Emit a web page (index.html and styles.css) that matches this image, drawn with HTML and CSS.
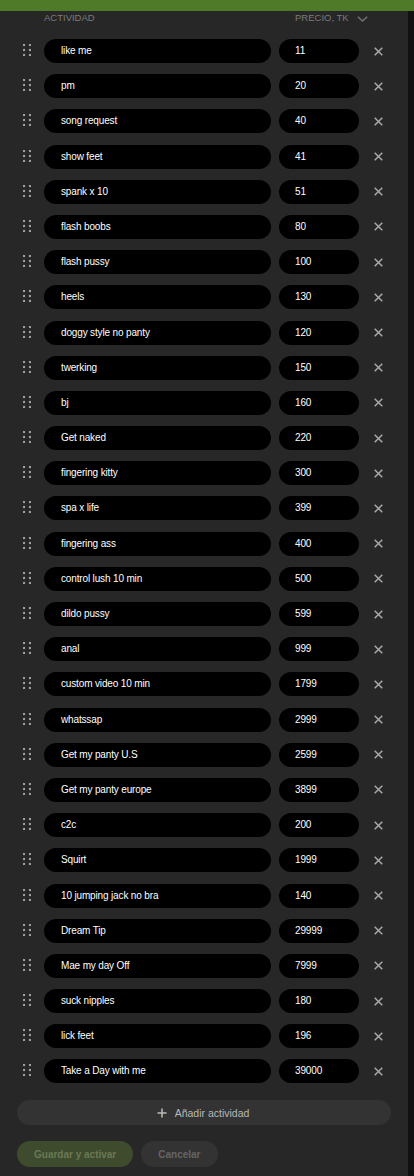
FILE: index.html
```html
<!DOCTYPE html>
<html lang="es">
<head>
<meta charset="utf-8">
<title>Actividades</title>
<link rel="stylesheet" href="styles.css">
</head>
<body>
<div class="topbar"></div>
<div class="frame">
  <main class="panel">
    <div class="head">
      <span class="head-act">ACTIVIDAD</span>
      <span class="head-price">PRECIO, TK
        <svg class="chev" width="11" height="6" viewBox="0 0 11 6"><polyline points="0.8,0.8 5.5,5 10.2,0.8" fill="none" stroke="#747474" stroke-width="1.5"/></svg>
      </span>
    </div>
    <div class="rows" id="rows">
      <div class="row"><span class="grip"><svg width="8" height="12" viewBox="0 0 8 12"><circle cx="1" cy="1" r="1.2"/><circle cx="7" cy="1" r="1.2"/><circle cx="1" cy="6" r="1.2"/><circle cx="7" cy="6" r="1.2"/><circle cx="1" cy="11" r="1.2"/><circle cx="7" cy="11" r="1.2"/></svg></span><div class="pill name">like me</div><div class="pill price">11</div><span class="del"><svg width="9" height="9" viewBox="0 0 9 9"><path d="M0.7 0.7L8.3 8.3M8.3 0.7L0.7 8.3"/></svg></span></div>
      <div class="row"><span class="grip"><svg width="8" height="12" viewBox="0 0 8 12"><circle cx="1" cy="1" r="1.2"/><circle cx="7" cy="1" r="1.2"/><circle cx="1" cy="6" r="1.2"/><circle cx="7" cy="6" r="1.2"/><circle cx="1" cy="11" r="1.2"/><circle cx="7" cy="11" r="1.2"/></svg></span><div class="pill name">pm</div><div class="pill price">20</div><span class="del"><svg width="9" height="9" viewBox="0 0 9 9"><path d="M0.7 0.7L8.3 8.3M8.3 0.7L0.7 8.3"/></svg></span></div>
      <div class="row"><span class="grip"><svg width="8" height="12" viewBox="0 0 8 12"><circle cx="1" cy="1" r="1.2"/><circle cx="7" cy="1" r="1.2"/><circle cx="1" cy="6" r="1.2"/><circle cx="7" cy="6" r="1.2"/><circle cx="1" cy="11" r="1.2"/><circle cx="7" cy="11" r="1.2"/></svg></span><div class="pill name">song request</div><div class="pill price">40</div><span class="del"><svg width="9" height="9" viewBox="0 0 9 9"><path d="M0.7 0.7L8.3 8.3M8.3 0.7L0.7 8.3"/></svg></span></div>
      <div class="row"><span class="grip"><svg width="8" height="12" viewBox="0 0 8 12"><circle cx="1" cy="1" r="1.2"/><circle cx="7" cy="1" r="1.2"/><circle cx="1" cy="6" r="1.2"/><circle cx="7" cy="6" r="1.2"/><circle cx="1" cy="11" r="1.2"/><circle cx="7" cy="11" r="1.2"/></svg></span><div class="pill name">show feet</div><div class="pill price">41</div><span class="del"><svg width="9" height="9" viewBox="0 0 9 9"><path d="M0.7 0.7L8.3 8.3M8.3 0.7L0.7 8.3"/></svg></span></div>
      <div class="row"><span class="grip"><svg width="8" height="12" viewBox="0 0 8 12"><circle cx="1" cy="1" r="1.2"/><circle cx="7" cy="1" r="1.2"/><circle cx="1" cy="6" r="1.2"/><circle cx="7" cy="6" r="1.2"/><circle cx="1" cy="11" r="1.2"/><circle cx="7" cy="11" r="1.2"/></svg></span><div class="pill name">spank x 10</div><div class="pill price">51</div><span class="del"><svg width="9" height="9" viewBox="0 0 9 9"><path d="M0.7 0.7L8.3 8.3M8.3 0.7L0.7 8.3"/></svg></span></div>
      <div class="row"><span class="grip"><svg width="8" height="12" viewBox="0 0 8 12"><circle cx="1" cy="1" r="1.2"/><circle cx="7" cy="1" r="1.2"/><circle cx="1" cy="6" r="1.2"/><circle cx="7" cy="6" r="1.2"/><circle cx="1" cy="11" r="1.2"/><circle cx="7" cy="11" r="1.2"/></svg></span><div class="pill name">flash boobs</div><div class="pill price">80</div><span class="del"><svg width="9" height="9" viewBox="0 0 9 9"><path d="M0.7 0.7L8.3 8.3M8.3 0.7L0.7 8.3"/></svg></span></div>
      <div class="row"><span class="grip"><svg width="8" height="12" viewBox="0 0 8 12"><circle cx="1" cy="1" r="1.2"/><circle cx="7" cy="1" r="1.2"/><circle cx="1" cy="6" r="1.2"/><circle cx="7" cy="6" r="1.2"/><circle cx="1" cy="11" r="1.2"/><circle cx="7" cy="11" r="1.2"/></svg></span><div class="pill name">flash pussy</div><div class="pill price">100</div><span class="del"><svg width="9" height="9" viewBox="0 0 9 9"><path d="M0.7 0.7L8.3 8.3M8.3 0.7L0.7 8.3"/></svg></span></div>
      <div class="row"><span class="grip"><svg width="8" height="12" viewBox="0 0 8 12"><circle cx="1" cy="1" r="1.2"/><circle cx="7" cy="1" r="1.2"/><circle cx="1" cy="6" r="1.2"/><circle cx="7" cy="6" r="1.2"/><circle cx="1" cy="11" r="1.2"/><circle cx="7" cy="11" r="1.2"/></svg></span><div class="pill name">heels</div><div class="pill price">130</div><span class="del"><svg width="9" height="9" viewBox="0 0 9 9"><path d="M0.7 0.7L8.3 8.3M8.3 0.7L0.7 8.3"/></svg></span></div>
      <div class="row"><span class="grip"><svg width="8" height="12" viewBox="0 0 8 12"><circle cx="1" cy="1" r="1.2"/><circle cx="7" cy="1" r="1.2"/><circle cx="1" cy="6" r="1.2"/><circle cx="7" cy="6" r="1.2"/><circle cx="1" cy="11" r="1.2"/><circle cx="7" cy="11" r="1.2"/></svg></span><div class="pill name">doggy style no panty</div><div class="pill price">120</div><span class="del"><svg width="9" height="9" viewBox="0 0 9 9"><path d="M0.7 0.7L8.3 8.3M8.3 0.7L0.7 8.3"/></svg></span></div>
      <div class="row"><span class="grip"><svg width="8" height="12" viewBox="0 0 8 12"><circle cx="1" cy="1" r="1.2"/><circle cx="7" cy="1" r="1.2"/><circle cx="1" cy="6" r="1.2"/><circle cx="7" cy="6" r="1.2"/><circle cx="1" cy="11" r="1.2"/><circle cx="7" cy="11" r="1.2"/></svg></span><div class="pill name">twerking</div><div class="pill price">150</div><span class="del"><svg width="9" height="9" viewBox="0 0 9 9"><path d="M0.7 0.7L8.3 8.3M8.3 0.7L0.7 8.3"/></svg></span></div>
      <div class="row"><span class="grip"><svg width="8" height="12" viewBox="0 0 8 12"><circle cx="1" cy="1" r="1.2"/><circle cx="7" cy="1" r="1.2"/><circle cx="1" cy="6" r="1.2"/><circle cx="7" cy="6" r="1.2"/><circle cx="1" cy="11" r="1.2"/><circle cx="7" cy="11" r="1.2"/></svg></span><div class="pill name">bj</div><div class="pill price">160</div><span class="del"><svg width="9" height="9" viewBox="0 0 9 9"><path d="M0.7 0.7L8.3 8.3M8.3 0.7L0.7 8.3"/></svg></span></div>
      <div class="row"><span class="grip"><svg width="8" height="12" viewBox="0 0 8 12"><circle cx="1" cy="1" r="1.2"/><circle cx="7" cy="1" r="1.2"/><circle cx="1" cy="6" r="1.2"/><circle cx="7" cy="6" r="1.2"/><circle cx="1" cy="11" r="1.2"/><circle cx="7" cy="11" r="1.2"/></svg></span><div class="pill name">Get naked</div><div class="pill price">220</div><span class="del"><svg width="9" height="9" viewBox="0 0 9 9"><path d="M0.7 0.7L8.3 8.3M8.3 0.7L0.7 8.3"/></svg></span></div>
      <div class="row"><span class="grip"><svg width="8" height="12" viewBox="0 0 8 12"><circle cx="1" cy="1" r="1.2"/><circle cx="7" cy="1" r="1.2"/><circle cx="1" cy="6" r="1.2"/><circle cx="7" cy="6" r="1.2"/><circle cx="1" cy="11" r="1.2"/><circle cx="7" cy="11" r="1.2"/></svg></span><div class="pill name">fingering kitty</div><div class="pill price">300</div><span class="del"><svg width="9" height="9" viewBox="0 0 9 9"><path d="M0.7 0.7L8.3 8.3M8.3 0.7L0.7 8.3"/></svg></span></div>
      <div class="row"><span class="grip"><svg width="8" height="12" viewBox="0 0 8 12"><circle cx="1" cy="1" r="1.2"/><circle cx="7" cy="1" r="1.2"/><circle cx="1" cy="6" r="1.2"/><circle cx="7" cy="6" r="1.2"/><circle cx="1" cy="11" r="1.2"/><circle cx="7" cy="11" r="1.2"/></svg></span><div class="pill name">spa x life</div><div class="pill price">399</div><span class="del"><svg width="9" height="9" viewBox="0 0 9 9"><path d="M0.7 0.7L8.3 8.3M8.3 0.7L0.7 8.3"/></svg></span></div>
      <div class="row"><span class="grip"><svg width="8" height="12" viewBox="0 0 8 12"><circle cx="1" cy="1" r="1.2"/><circle cx="7" cy="1" r="1.2"/><circle cx="1" cy="6" r="1.2"/><circle cx="7" cy="6" r="1.2"/><circle cx="1" cy="11" r="1.2"/><circle cx="7" cy="11" r="1.2"/></svg></span><div class="pill name">fingering ass</div><div class="pill price">400</div><span class="del"><svg width="9" height="9" viewBox="0 0 9 9"><path d="M0.7 0.7L8.3 8.3M8.3 0.7L0.7 8.3"/></svg></span></div>
      <div class="row"><span class="grip"><svg width="8" height="12" viewBox="0 0 8 12"><circle cx="1" cy="1" r="1.2"/><circle cx="7" cy="1" r="1.2"/><circle cx="1" cy="6" r="1.2"/><circle cx="7" cy="6" r="1.2"/><circle cx="1" cy="11" r="1.2"/><circle cx="7" cy="11" r="1.2"/></svg></span><div class="pill name">control lush 10 min</div><div class="pill price">500</div><span class="del"><svg width="9" height="9" viewBox="0 0 9 9"><path d="M0.7 0.7L8.3 8.3M8.3 0.7L0.7 8.3"/></svg></span></div>
      <div class="row"><span class="grip"><svg width="8" height="12" viewBox="0 0 8 12"><circle cx="1" cy="1" r="1.2"/><circle cx="7" cy="1" r="1.2"/><circle cx="1" cy="6" r="1.2"/><circle cx="7" cy="6" r="1.2"/><circle cx="1" cy="11" r="1.2"/><circle cx="7" cy="11" r="1.2"/></svg></span><div class="pill name">dildo pussy</div><div class="pill price">599</div><span class="del"><svg width="9" height="9" viewBox="0 0 9 9"><path d="M0.7 0.7L8.3 8.3M8.3 0.7L0.7 8.3"/></svg></span></div>
      <div class="row"><span class="grip"><svg width="8" height="12" viewBox="0 0 8 12"><circle cx="1" cy="1" r="1.2"/><circle cx="7" cy="1" r="1.2"/><circle cx="1" cy="6" r="1.2"/><circle cx="7" cy="6" r="1.2"/><circle cx="1" cy="11" r="1.2"/><circle cx="7" cy="11" r="1.2"/></svg></span><div class="pill name">anal</div><div class="pill price">999</div><span class="del"><svg width="9" height="9" viewBox="0 0 9 9"><path d="M0.7 0.7L8.3 8.3M8.3 0.7L0.7 8.3"/></svg></span></div>
      <div class="row"><span class="grip"><svg width="8" height="12" viewBox="0 0 8 12"><circle cx="1" cy="1" r="1.2"/><circle cx="7" cy="1" r="1.2"/><circle cx="1" cy="6" r="1.2"/><circle cx="7" cy="6" r="1.2"/><circle cx="1" cy="11" r="1.2"/><circle cx="7" cy="11" r="1.2"/></svg></span><div class="pill name">custom video 10 min</div><div class="pill price">1799</div><span class="del"><svg width="9" height="9" viewBox="0 0 9 9"><path d="M0.7 0.7L8.3 8.3M8.3 0.7L0.7 8.3"/></svg></span></div>
      <div class="row"><span class="grip"><svg width="8" height="12" viewBox="0 0 8 12"><circle cx="1" cy="1" r="1.2"/><circle cx="7" cy="1" r="1.2"/><circle cx="1" cy="6" r="1.2"/><circle cx="7" cy="6" r="1.2"/><circle cx="1" cy="11" r="1.2"/><circle cx="7" cy="11" r="1.2"/></svg></span><div class="pill name">whatssap</div><div class="pill price">2999</div><span class="del"><svg width="9" height="9" viewBox="0 0 9 9"><path d="M0.7 0.7L8.3 8.3M8.3 0.7L0.7 8.3"/></svg></span></div>
      <div class="row"><span class="grip"><svg width="8" height="12" viewBox="0 0 8 12"><circle cx="1" cy="1" r="1.2"/><circle cx="7" cy="1" r="1.2"/><circle cx="1" cy="6" r="1.2"/><circle cx="7" cy="6" r="1.2"/><circle cx="1" cy="11" r="1.2"/><circle cx="7" cy="11" r="1.2"/></svg></span><div class="pill name">Get my panty U.S</div><div class="pill price">2599</div><span class="del"><svg width="9" height="9" viewBox="0 0 9 9"><path d="M0.7 0.7L8.3 8.3M8.3 0.7L0.7 8.3"/></svg></span></div>
      <div class="row"><span class="grip"><svg width="8" height="12" viewBox="0 0 8 12"><circle cx="1" cy="1" r="1.2"/><circle cx="7" cy="1" r="1.2"/><circle cx="1" cy="6" r="1.2"/><circle cx="7" cy="6" r="1.2"/><circle cx="1" cy="11" r="1.2"/><circle cx="7" cy="11" r="1.2"/></svg></span><div class="pill name">Get my panty europe</div><div class="pill price">3899</div><span class="del"><svg width="9" height="9" viewBox="0 0 9 9"><path d="M0.7 0.7L8.3 8.3M8.3 0.7L0.7 8.3"/></svg></span></div>
      <div class="row"><span class="grip"><svg width="8" height="12" viewBox="0 0 8 12"><circle cx="1" cy="1" r="1.2"/><circle cx="7" cy="1" r="1.2"/><circle cx="1" cy="6" r="1.2"/><circle cx="7" cy="6" r="1.2"/><circle cx="1" cy="11" r="1.2"/><circle cx="7" cy="11" r="1.2"/></svg></span><div class="pill name">c2c</div><div class="pill price">200</div><span class="del"><svg width="9" height="9" viewBox="0 0 9 9"><path d="M0.7 0.7L8.3 8.3M8.3 0.7L0.7 8.3"/></svg></span></div>
      <div class="row"><span class="grip"><svg width="8" height="12" viewBox="0 0 8 12"><circle cx="1" cy="1" r="1.2"/><circle cx="7" cy="1" r="1.2"/><circle cx="1" cy="6" r="1.2"/><circle cx="7" cy="6" r="1.2"/><circle cx="1" cy="11" r="1.2"/><circle cx="7" cy="11" r="1.2"/></svg></span><div class="pill name">Squirt</div><div class="pill price">1999</div><span class="del"><svg width="9" height="9" viewBox="0 0 9 9"><path d="M0.7 0.7L8.3 8.3M8.3 0.7L0.7 8.3"/></svg></span></div>
      <div class="row"><span class="grip"><svg width="8" height="12" viewBox="0 0 8 12"><circle cx="1" cy="1" r="1.2"/><circle cx="7" cy="1" r="1.2"/><circle cx="1" cy="6" r="1.2"/><circle cx="7" cy="6" r="1.2"/><circle cx="1" cy="11" r="1.2"/><circle cx="7" cy="11" r="1.2"/></svg></span><div class="pill name">10 jumping jack no bra</div><div class="pill price">140</div><span class="del"><svg width="9" height="9" viewBox="0 0 9 9"><path d="M0.7 0.7L8.3 8.3M8.3 0.7L0.7 8.3"/></svg></span></div>
      <div class="row"><span class="grip"><svg width="8" height="12" viewBox="0 0 8 12"><circle cx="1" cy="1" r="1.2"/><circle cx="7" cy="1" r="1.2"/><circle cx="1" cy="6" r="1.2"/><circle cx="7" cy="6" r="1.2"/><circle cx="1" cy="11" r="1.2"/><circle cx="7" cy="11" r="1.2"/></svg></span><div class="pill name">Dream Tip</div><div class="pill price">29999</div><span class="del"><svg width="9" height="9" viewBox="0 0 9 9"><path d="M0.7 0.7L8.3 8.3M8.3 0.7L0.7 8.3"/></svg></span></div>
      <div class="row"><span class="grip"><svg width="8" height="12" viewBox="0 0 8 12"><circle cx="1" cy="1" r="1.2"/><circle cx="7" cy="1" r="1.2"/><circle cx="1" cy="6" r="1.2"/><circle cx="7" cy="6" r="1.2"/><circle cx="1" cy="11" r="1.2"/><circle cx="7" cy="11" r="1.2"/></svg></span><div class="pill name">Mae my day Off</div><div class="pill price">7999</div><span class="del"><svg width="9" height="9" viewBox="0 0 9 9"><path d="M0.7 0.7L8.3 8.3M8.3 0.7L0.7 8.3"/></svg></span></div>
      <div class="row"><span class="grip"><svg width="8" height="12" viewBox="0 0 8 12"><circle cx="1" cy="1" r="1.2"/><circle cx="7" cy="1" r="1.2"/><circle cx="1" cy="6" r="1.2"/><circle cx="7" cy="6" r="1.2"/><circle cx="1" cy="11" r="1.2"/><circle cx="7" cy="11" r="1.2"/></svg></span><div class="pill name">suck nipples</div><div class="pill price">180</div><span class="del"><svg width="9" height="9" viewBox="0 0 9 9"><path d="M0.7 0.7L8.3 8.3M8.3 0.7L0.7 8.3"/></svg></span></div>
      <div class="row"><span class="grip"><svg width="8" height="12" viewBox="0 0 8 12"><circle cx="1" cy="1" r="1.2"/><circle cx="7" cy="1" r="1.2"/><circle cx="1" cy="6" r="1.2"/><circle cx="7" cy="6" r="1.2"/><circle cx="1" cy="11" r="1.2"/><circle cx="7" cy="11" r="1.2"/></svg></span><div class="pill name">lick feet</div><div class="pill price">196</div><span class="del"><svg width="9" height="9" viewBox="0 0 9 9"><path d="M0.7 0.7L8.3 8.3M8.3 0.7L0.7 8.3"/></svg></span></div>
      <div class="row"><span class="grip"><svg width="8" height="12" viewBox="0 0 8 12"><circle cx="1" cy="1" r="1.2"/><circle cx="7" cy="1" r="1.2"/><circle cx="1" cy="6" r="1.2"/><circle cx="7" cy="6" r="1.2"/><circle cx="1" cy="11" r="1.2"/><circle cx="7" cy="11" r="1.2"/></svg></span><div class="pill name">Take a Day with me</div><div class="pill price">39000</div><span class="del"><svg width="9" height="9" viewBox="0 0 9 9"><path d="M0.7 0.7L8.3 8.3M8.3 0.7L0.7 8.3"/></svg></span></div>
    </div>
    <button class="add" type="button">
      <svg width="10" height="10" viewBox="0 0 10 10"><path d="M5 0.5V9.5M0.5 5H9.5" stroke="#bdbdbd" stroke-width="1.5"/></svg>
      <span>Añadir actividad</span>
    </button>
    <div class="actions">
      <button class="save" type="button">Guardar y activar</button>
      <button class="cancel" type="button">Cancelar</button>
    </div>
  </main>
  <div class="rail"></div>
</div>
</body>
</html>
```

FILE: styles.css
```css
* { box-sizing: border-box; }

html, body {
  margin: 0;
  padding: 0;
  background: #272727;
  font-family: "Liberation Sans", Arial, sans-serif;
  height: 1176px;
  overflow: hidden;
}

.topbar {
  height: 11px;
  background: #4f7a28;
}

.frame {
  display: flex;
  height: 1165px;
}

.panel {
  width: 408px;
  flex: none;
  padding: 0 17px;
}

.rail {
  flex: 1;
  background: #111111;
}

.head {
  height: 28px;
  padding-top: 1px;
  display: flex;
  font-size: 9.5px;
  line-height: 12px;
  color: #7a7a7a;
}

.head-act {
  margin-left: 27px;
  width: 251px;
}

.head-price {
  display: flex;
  align-items: flex-start;
}

.chev {
  margin-left: 8px;
  margin-top: 4px;
}

.rows {
  display: flex;
  flex-direction: column;
  gap: 11.2px;
}

.row {
  display: flex;
  align-items: center;
  height: 24px;
}

.grip {
  width: 27px;
  flex: none;
  padding-left: 6px;
  display: flex;
  align-items: center;
  margin-top: -2px;
}

.grip svg { fill: #a4a4a4; display: block; }

.pill {
  height: 24px;
  border-radius: 12px;
  background: #000;
  color: #fff;
  font-size: 10px;
  letter-spacing: -0.15px;
  line-height: 24px;
  white-space: nowrap;
}

.name {
  width: 227px;
  padding-left: 17px;
}

.price {
  width: 80px;
  margin-left: 8px;
  padding-left: 16px;
}

.del {
  flex: 1;
  display: flex;
  justify-content: flex-end;
  padding-right: 8px;
}

.del svg {
  display: block;
  stroke: #a9a9a9;
  stroke-width: 1.5;
}

.add {
  margin-top: 17px;
  width: 100%;
  height: 25px;
  border: 0;
  border-radius: 13px;
  background: #333333;
  color: #b8b8b8;
  font-family: inherit;
  font-size: 10.5px;
  display: flex;
  align-items: center;
  justify-content: center;
  gap: 8px;
  padding: 0;
  padding-right: 2px;
}

.add svg { display: block; }

.actions {
  margin-top: 16px;
  display: flex;
  gap: 8px;
}

.actions button {
  height: 26px;
  border: 0;
  border-radius: 13px;
  font-family: inherit;
  font-size: 10px;
  font-weight: bold;
  padding: 0 17px;
}

.save {
  background: #3e4b2d;
  color: #6a7956;
}

.cancel {
  background: #333333;
  color: #656565;
}
```
